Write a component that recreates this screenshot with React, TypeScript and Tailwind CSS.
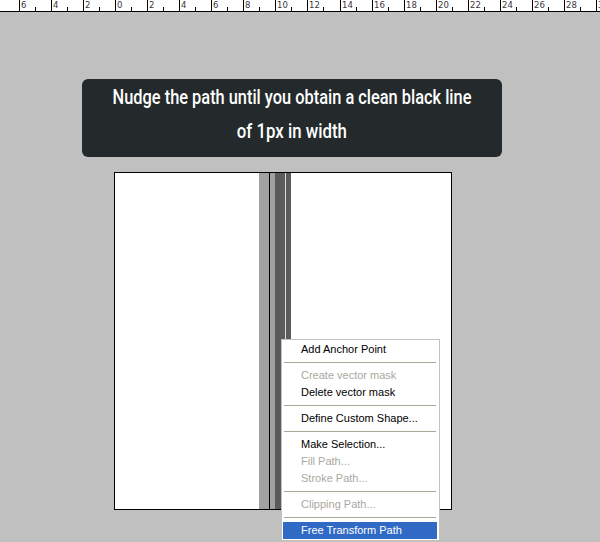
import React from "react";

const labels = ["6", "4", "2", "0", "2", "4", "6", "8", "10", "12", "14", "16", "18", "20", "22", "24", "26", "28", "30"];

function Ruler() {
  return (
    <svg width="600" height="12" className="block" style={{ fontFamily: '"DejaVu Sans", sans-serif' }}>
      <rect x="0" y="0" width="600" height="11" fill="#ffffff" />
      <line x1="0" y1="11.5" x2="600" y2="11.5" stroke="#000" strokeWidth="1" />
      {labels.map((l, i) => {
        const x = 19 + i * 32.05;
        const xr = Math.round(x) + 0.5;
        const xm = Math.round(x + 16) + 0.5;
        return (
          <g key={i}>
            <line x1={xr} y1="0" x2={xr} y2="11" stroke="#000" strokeWidth="1" />
            <line x1={xm} y1="7" x2={xm} y2="11" stroke="#000" strokeWidth="1" />
            <text x={Math.round(x) + 2} y="7.5" fontSize="8.5" fill="#3a3540">
              {l}
            </text>
          </g>
        );
      })}
    </svg>
  );
}

type Item = { label: string; disabled?: boolean; selected?: boolean } | "sep";

const items: Item[] = [
  { label: "Add Anchor Point" },
  "sep",
  { label: "Create vector mask", disabled: true },
  { label: "Delete vector mask" },
  "sep",
  { label: "Define Custom Shape..." },
  "sep",
  { label: "Make Selection..." },
  { label: "Fill Path...", disabled: true },
  { label: "Stroke Path...", disabled: true },
  "sep",
  { label: "Clipping Path...", disabled: true },
  "sep",
  { label: "Free Transform Path", selected: true },
];

function ContextMenu() {
  return (
    <div
      className="absolute left-[281px] top-[339px] w-[159px] border border-[#c4c2bb] bg-white p-[1px] pr-[2px]"
      style={{ fontFamily: '"Liberation Sans", Arial, sans-serif' }}
    >
      {items.map((it, i) =>
        it === "sep" ? (
          <div key={i} className="flex h-[9px] items-center px-[1px]">
            <div className="h-[1px] w-full bg-[#aca899]" />
          </div>
        ) : (
          <div
            key={i}
            className={`flex h-[17px] items-center pl-[18px] text-[11px] leading-none ${
              it.selected ? "bg-[#316ac5] text-white" : it.disabled ? "text-[#aaa8a0]" : "text-black"
            }`}
          >
            {it.label}
          </div>
        )
      )}
    </div>
  );
}

export default function App() {
  return (
    <div className="relative h-[542px] w-[600px] overflow-hidden bg-[#c0c0c0]">
      <Ruler />
      <div
        className="ml-[82px] mt-[67px] flex h-[78px] w-[420px] flex-col items-center rounded-[6px] bg-[#242a2b] pt-[1px] text-[21px] font-medium leading-[34px] text-white"
        style={{ fontFamily: 'Roboto, "Liberation Sans", Arial, sans-serif' }}
      >
        <div className="whitespace-nowrap scale-x-[0.78]">Nudge the path until you obtain a clean black line</div>
        <div className="whitespace-nowrap scale-x-[0.8]">of 1px in width</div>
      </div>
      <div className="ml-[114px] mt-[15px] flex h-[338px] w-[338px] border border-black">
        <div className="w-[144px] bg-white" />
        <div className="w-[10px] bg-[#a2a2a2]" />
        <div className="w-[1px] bg-black" />
        <div className="w-[5px] bg-[#a2a2a2]" />
        <div className="w-[10px] bg-[#5b5b5b]" />
        <div className="w-[1px] bg-[#dcdcdc]" />
        <div className="w-[5px] bg-[#5b5b5b]" />
        <div className="flex-1 bg-white" />
      </div>
      <ContextMenu />
    </div>
  );
}
